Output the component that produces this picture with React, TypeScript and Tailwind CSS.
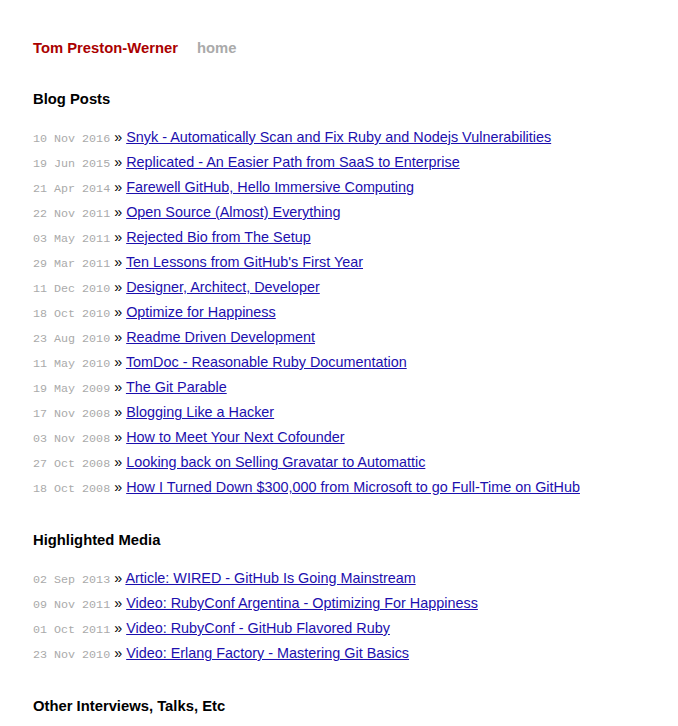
const posts = [
  ["10 Nov 2016", "Snyk - Automatically Scan and Fix Ruby and Nodejs Vulnerabilities"],
  ["19 Jun 2015", "Replicated - An Easier Path from SaaS to Enterprise"],
  ["21 Apr 2014", "Farewell GitHub, Hello Immersive Computing"],
  ["22 Nov 2011", "Open Source (Almost) Everything"],
  ["03 May 2011", "Rejected Bio from The Setup"],
  ["29 Mar 2011", "Ten Lessons from GitHub's First Year"],
  ["11 Dec 2010", "Designer, Architect, Developer"],
  ["18 Oct 2010", "Optimize for Happiness"],
  ["23 Aug 2010", "Readme Driven Development"],
  ["11 May 2010", "TomDoc - Reasonable Ruby Documentation"],
  ["19 May 2009", "The Git Parable"],
  ["17 Nov 2008", "Blogging Like a Hacker"],
  ["03 Nov 2008", "How to Meet Your Next Cofounder"],
  ["27 Oct 2008", "Looking back on Selling Gravatar to Automattic"],
  ["18 Oct 2008", "How I Turned Down $300,000 from Microsoft to go Full-Time on GitHub"],
];

const media = [
  ["02 Sep 2013", "Article: WIRED - GitHub Is Going Mainstream"],
  ["09 Nov 2011", "Video: RubyConf Argentina - Optimizing For Happiness"],
  ["01 Oct 2011", "Video: RubyConf - GitHub Flavored Ruby"],
  ["23 Nov 2010", "Video: Erlang Factory - Mastering Git Basics"],
];

function PostList({ items }: { items: string[][] }) {
  return (
    <ul className="mt-[13px]">
      {items.map(([date, title]) => (
        <li key={title} className="h-[25px] leading-[25px] whitespace-nowrap text-[14.4px]">
          <span className="text-[#aaa] font-['Liberation_Mono',monospace] text-[11.7px] leading-none">{date}</span>{" "}
          &raquo;{" "}
          <a href="#" className="text-[#1c0fae] underline">
            {title}
          </a>
        </li>
      ))}
    </ul>
  );
}

export default function App() {
  return (
    <div className="min-h-screen bg-white text-black font-['Liberation_Sans',Arial,sans-serif] text-[14.8px] pl-[33px] pt-[36px]">
      {/* header */}
      <div className="flex gap-[19px] leading-[25px] font-bold">
        <a href="#" className="text-[#aa0000]">Tom Preston-Werner</a>
        <a href="#" className="text-[#aaa]">home</a>
      </div>

      <h2 className="mt-[26px] font-bold leading-[25px]">Blog Posts</h2>
      <PostList items={posts} />

      <h2 className="mt-[28px] font-bold leading-[25px]">Highlighted Media</h2>
      <PostList items={media} />

      <h2 className="mt-[28px] font-bold leading-[25px]">Other Interviews, Talks, Etc</h2>
    </div>
  );
}
